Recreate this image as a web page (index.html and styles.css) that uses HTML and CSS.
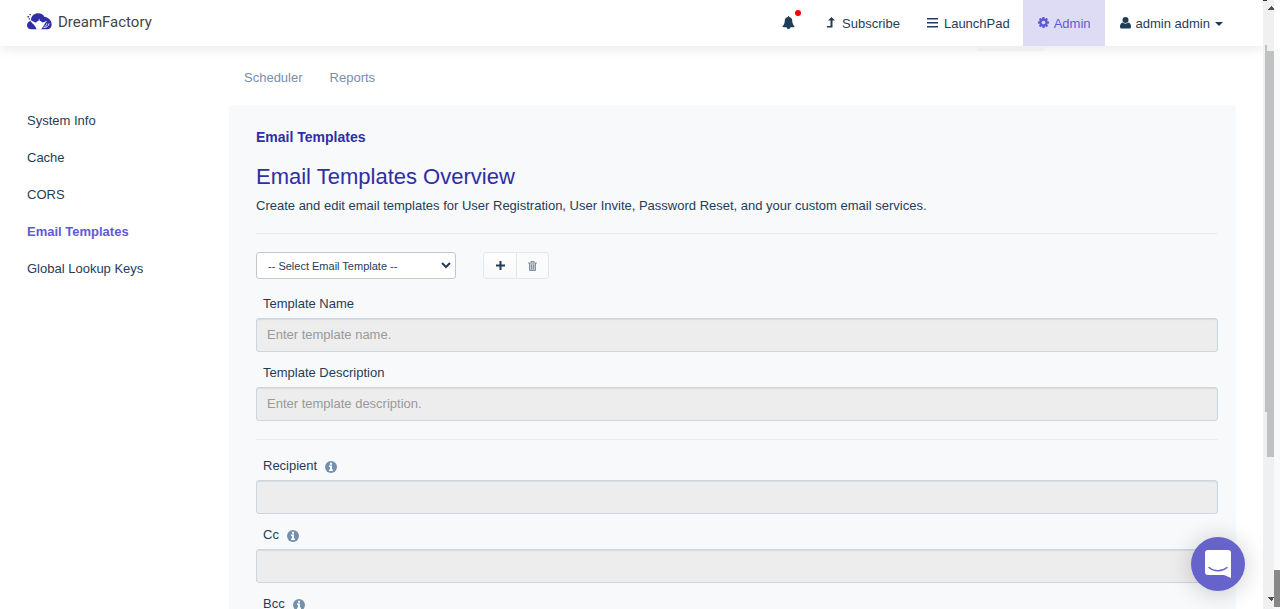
FILE: index.html
```html
<!DOCTYPE html>
<html lang="en">
<head>
<meta charset="utf-8">
<title>DreamFactory - Email Templates</title>
<link rel="stylesheet" href="styles.css">
</head>
<body>
<svg class="sprite" aria-hidden="true">
  <symbol id="info" viewBox="0 0 12 12"><circle cx="6" cy="6" r="6" fill="currentColor"/><path fill="#fff" d="M5 1.7h2v2H5zM4 4.6h3v3.8h1v1.5H4V8.400h1V6H4z"/></symbol>
</svg>
<div class="window">
  <div class="app">
    <header class="topbar">
      <a class="brand" href="#">
        <svg class="brand-mark" viewBox="0 0 25 17" aria-hidden="true">
          <path fill="#2f2ea5" d="M4 6.500C4.500 2.500 7.500.3 11.300.3c3 0 5 1.500 6 3.500 3.500.2 7.400 3.500 7.400 7.500 0 3-2 5-4.700 5H4.200C1.800 16.300 0 14.700 0 12.300 0 10 1.500 8.500 3.500 8z"/>
          <path fill="#fff" d="M3.300 6.800C5.500 8 7 9.500 9.300 9.500c.5-1.200 1.500-1.700 2.300-1.800l.6-2.200.6 2.200c.8.1 1.700.6 2.200 1.800 2 0 3.500-1.200 5.500-1.700-2.500 1.500-3.500 5.500-6.500 8.800H9.500C9 13 5 10 3.300 8z"/>
          <path fill="none" stroke="#fff" stroke-width=".9" d="M16.500 14.300c2.500.5 5-.8 5.700-4M19.700 10.500c.2 1.500-.7 2.300-2 2.500"/>
          <path fill="#2f2ea5" d="M2.500 1h1.300v1.300H2.500zM.5 3H2v1.500H.5zM1.800 5.300h1.300v1.300H1.800z"/>
        </svg>
        <span>DreamFactory</span>
      </a>
      <nav class="topnav" aria-label="Main">
        <button class="bell" type="button" aria-label="Notifications">
          <svg width="13" height="13" viewBox="0 0 1792 1792"><path fill="currentColor" d="M1728 1408q0 52-38 90t-90 38h-448q0 106-75 181t-181 75-181-75-75-181H192q-52 0-90-38t-38-90q50-42 91-88t85-119.500 74.500-158.500 50-206 19.500-260q0-152 117-282.500t307-158.500q-8-19-8-39 0-40 28-68t68-28 68 28 28 68q0 20-8 39 190 28 307 158.500t117 282.500q0 139 19.500 260t50 206 74.500 158.500 85 119.500 91 88z"/></svg>
          <span class="dot"></span>
        </button>
        <a class="toplink" href="#">
          <svg width="8" height="11" viewBox="0 0 8 11" aria-hidden="true"><path fill="currentColor" d="M4.500 0L8 3.500H5.500V10.500H0V9h3.500V3.500H1z"/></svg>
          <span>Subscribe</span>
        </a>
        <a class="toplink launch" href="#">
          <svg width="11" height="10" viewBox="0 0 11 10" aria-hidden="true"><path fill="currentColor" d="M0 0h11v1.500H0zM0 4h11v1.500H0zM0 8h11v1.500H0z"/></svg>
          <span>LaunchPad</span>
        </a>
        <a class="toplink current" href="#" aria-current="page">
          <svg width="13" height="13" viewBox="0 0 1792 1792" aria-hidden="true"><path fill="currentColor" d="M1152 896q0-106-75-181t-181-75-181 75-75 181 75 181 181 75 181-75 75-181zm512-109v222q0 12-8 23t-20 13l-185 28q-19 54-39 91 35 50 107 138 10 12 10 25t-9 23q-27 37-99 108t-94 71q-12 0-26-9l-138-108q-44 23-91 38-16 136-29 186-7 28-36 28H785q-14 0-24.500-8.500T749 1634l-28-184q-49-16-90-37l-141 107q-10 9-25 9-14 0-25-11-126-114-165-168-7-10-7-23 0-12 8-23 15-21 51-66.500t54-70.500q-27-50-41-99l-183-27q-13-2-21-12.500t-8-23.500V783q0-12 8-23t19-13l186-28q14-46 39-92-40-57-107-138-10-12-10-24 0-10 9-23 26-36 98.500-107.500T455 263q13 0 26 10l138 107q44-23 91-38 16-136 29-186 7-28 36-28h222q14 0 24.500 8.500T1033 158l28 184q49 16 90 37l142-107q9-9 24-9 13 0 25 10 129 119 165 170 7 8 7 22 0 12-8 23-15 21-51 66.500t-54 70.500q26 50 41 98l183 28q13 2 21 12.500t8 23.500z"/></svg>
          <span>Admin</span>
        </a>
        <a class="toplink user" href="#">
          <svg width="11" height="12" viewBox="0 0 11 12" aria-hidden="true"><circle cx="5.500" cy="3" r="3" fill="currentColor"/><path fill="currentColor" d="M2.500 5.500c2 1.500 4 1.500 6 0C10.500 6 11 8 11 10q0 1.500-1.500 1.500h-8Q0 11.500 0 10c0-2 .5-4 2.500-4.500z"/></svg>
          <span>admin admin</span>
          <svg class="caret" width="8" height="4" viewBox="0 0 8 4" aria-hidden="true"><path fill="currentColor" d="M0 0h8L4 4z"/></svg>
        </a>
      </nav>
      <span class="tab-remnant"></span>
    </header>
    <div class="layout">
      <nav class="sidebar" aria-label="Configuration">
        <a href="#">System Info</a>
        <a href="#">Cache</a>
        <a href="#">CORS</a>
        <a class="active" href="#">Email Templates</a>
        <a href="#">Global Lookup Keys</a>
      </nav>
      <main class="content">
        <nav class="tabs" aria-label="Sections"><a href="#">Scheduler</a><a href="#">Reports</a></nav>
        <section class="panel">
          <h1>Email Templates</h1>
          <h2>Email Templates Overview</h2>
          <p>Create and edit email templates for User Registration, User Invite, Password Reset, and your custom email services.</p>
          <hr>
          <form>
            <div class="tools">
              <div class="picker">
                <select aria-label="Email template"><option>-- Select Email Template --</option></select>
                <svg width="10" height="7" viewBox="0 0 10 7" aria-hidden="true"><path fill="none" stroke="currentColor" stroke-width="2" d="M1 1l4 4 4-4"/></svg>
              </div>
              <div class="group">
                <button type="button" aria-label="Add template"><svg width="9" height="9" viewBox="0 0 9 9"><path fill="currentColor" d="M3.500 0h2v3.500H9v2H5.500V9h-2V5.500H0v-2h3.500z"/></svg></button>
                <button type="button" aria-label="Delete template" disabled><svg width="9" height="10" viewBox="0 0 9 10"><path fill="#c3cad1" d="M1.500 2.500h6v7h-6z"/><path fill="none" stroke="currentColor" d="M0 2h9M3 2V.5h3V2M1.500 2v7.500h6V2M3.500 3.500v5M5.500 3.500v5"/></svg></button>
              </div>
            </div>
            <div class="field"><label for="name">Template Name</label><input id="name" type="text" placeholder="Enter template name." disabled></div>
            <div class="field"><label for="desc">Template Description</label><input id="desc" type="text" placeholder="Enter template description." disabled></div>
            <hr class="split">
            <div class="field"><label for="to">Recipient <svg class="info"><use href="#info"/></svg></label><input id="to" type="text" disabled></div>
            <div class="field"><label for="cc">Cc <svg class="info"><use href="#info"/></svg></label><input id="cc" type="text" disabled></div>
            <div class="field"><label for="bcc">Bcc <svg class="info"><use href="#info"/></svg></label><input id="bcc" type="text" disabled></div>
          </form>
        </section>
      </main>
    </div>
    <button class="chat" type="button" aria-label="Open chat">
      <svg width="26" height="28" viewBox="0 0 26 28"><path fill="#fff" d="M3 0h20q3 0 3 3v25l-7-3H3q-3 0-3-3V3q0-3 3-3z"/><path fill="none" stroke="#6664cb" stroke-width="1.500" stroke-linecap="round" d="M4 17.500c5 4.300 13 4.300 18 0"/></svg>
    </button>
  </div>
  <div class="scroll" aria-hidden="true">
    <svg width="17" height="609" viewBox="0 0 17 609">
      <path fill="#f0f0f0" d="M0 0h11v609H0z"/>
      <path fill="#f8f9fb" d="M11 49h6v560h-6z"/>
      <path fill="#c1c1c1" d="M2 45h2v6h7v406H4v-45H2z"/>
      <path fill="#333" d="M0 0h4v1H0z"/>
      <path fill="#505050" d="M5 10h6V8h-1V7H9V6H8v1H7v1H6v1H5zM5 597h6v1h-1v2H9v1H8v-1H7v-1H6v-1H5z"/>
      <path fill="#888" d="M11 570h6v37h-6z"/>
    </svg>
  </div>
</div>
</body>
</html>
```
FILE: styles.css
```css
* { box-sizing: border-box; }
body {
  margin: 0;
  overflow: hidden;
  background: #fff;
  color: #1f3d58;
  font: 13px/20px "Liberation Sans", Arial, sans-serif;
}
a { color: inherit; text-decoration: none; }
button { font: inherit; color: inherit; cursor: pointer; }
.sprite { display: none; }
.window { display: flex; height: 100vh; overflow: hidden; }
.app { flex: 1; min-width: 0; position: relative; }
.scroll { flex: none; display: flex; z-index: 3; background: #fff; }

.topbar {
  position: relative;
  z-index: 2;
  display: flex;
  justify-content: space-between;
  height: 46px;
  padding: 0 24px 0 27px;
  background: #fff;
  box-shadow: 0 2px 12px rgba(0, 0, 0, .1);
}
.brand {
  display: flex;
  align-items: center;
  gap: 6px;
  padding-bottom: 3px;
  color: #444;
  font: 15px/20px Roboto, sans-serif;
}
.brand-mark { width: 25px; height: 17px; }
.topnav { display: flex; }
.bell {
  position: relative;
  padding: 0 0 2px;
  border: 0;
  background: none;
  width: 13px;
  margin-right: 32px;
}
.bell svg { display: block; }
.dot {
  position: absolute;
  top: 10px;
  right: -6px;
  width: 6px;
  height: 6px;
  border-radius: 50%;
  background: #f00;
}
.toplink { display: flex; align-items: center; gap: 7px; padding-top: 1px; }
.toplink svg { margin-bottom: 2px; }
.toplink .caret { margin: 1px 0 0; }
.launch { gap: 6px; margin: 0 13px 0 27px; }
.current { gap: 4px; padding: 1px 14px 0; background: #dedcf5; color: #5f59d9; }
.user { padding: 1px 16px 0 15px; gap: 5px; }
.tab-remnant {
  position: absolute;
  top: 46px;
  right: 219px;
  width: 67px;
  height: 5px;
  background: #eeeff1;
}

.layout { display: flex; }
.sidebar {
  flex: none;
  display: flex;
  flex-direction: column;
  gap: 17px;
  width: 229px;
  padding: 65px 27px 0;
}
.sidebar .active { color: #5f59d9; font-weight: bold; }
.content { flex: 1; min-width: 0; margin-right: 27px; }
.tabs { display: flex; gap: 27px; padding: 22px 15px 17px; color: #7391ac; }
.panel {
  padding: 22px 18px 30px 27px;
  border-radius: 4px;
  background: #f8f9fb;
}
h1 { margin: 0 0 15px; color: #2f2ea5; font-size: 14px; line-height: 20px; }
h2 { margin: 0 0 4px; color: #2f2ea5; font-size: 22px; font-weight: normal; line-height: 30px; }
p { margin: 0; }
hr { margin: 17px 0 18px; border: 0; border-top: 1px solid #ebedf0; }
.split { margin: 18px 0 16px; }
.tools { display: flex; gap: 27px; height: 27px; margin-bottom: 15px; }
.picker { position: relative; width: 200px; }
.picker select {
  width: 100%;
  height: 27px;
  padding: 0 24px 0 11px;
  border: 1px solid #c5c8ca;
  border-radius: 3px;
  background: #fff;
  color: inherit;
  font: 11px/16px "Liberation Sans", Arial, sans-serif;
  appearance: none;
}
.picker svg { position: absolute; right: 5px; top: 10px; pointer-events: none; }
.group { display: flex; }
.group button {
  display: flex;
  align-items: center;
  justify-content: center;
  width: 34px;
  padding: 0;
  border: 1px solid #e5e6e8;
  border-radius: 3px 0 0 3px;
  background: linear-gradient(#fff, #f8f8f8);
}
.group button + button { width: 33px; margin-left: -1px; border-radius: 0 3px 3px 0; background: #fafbfb; color: #84929f; }
.field { display: flex; flex-direction: column; gap: 4px; }
.field + .field { margin-top: 11px; }
.field label { display: flex; align-items: center; gap: 8px; padding-left: 7px; }
.field input {
  width: 100%;
  height: 34px;
  padding: 5px 10px 7px;
  border: 1px solid #cad6e0;
  border-radius: 3px;
  background: #ededed;
  box-shadow: inset 0 1px 1px rgba(0, 0, 0, .08);
  font: inherit;
}
.field input::placeholder { color: #999; opacity: 1; }
.info { width: 12px; height: 12px; margin-top: 2px; color: #7391ac; }
.chat {
  position: absolute;
  z-index: 2;
  right: 18px;
  bottom: 18px;
  display: flex;
  align-items: center;
  justify-content: center;
  width: 54px;
  height: 54px;
  padding: 0;
  border: 0;
  border-radius: 50%;
  background: #6664cb;
  box-shadow: 0 2px 24px rgba(0, 0, 0, .2);
}
```
